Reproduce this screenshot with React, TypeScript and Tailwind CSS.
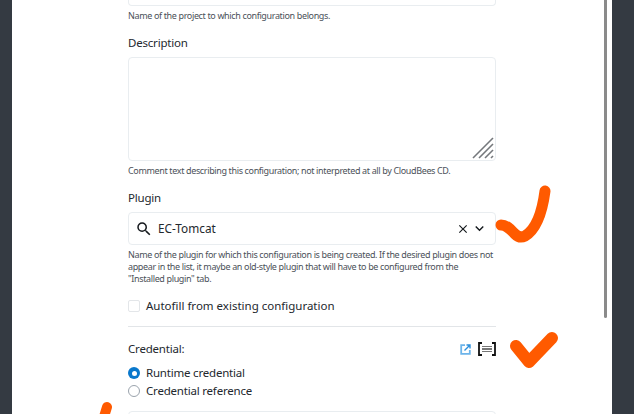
import { MdClose, MdExpandMore, MdSearch } from "react-icons/md";

function HelpText({ children }: { children: React.ReactNode }) {
  return <p className="text-[9px] leading-3 tracking-[-0.36px] text-[#4b5159]">{children}</p>;
}

export default function App() {
  return (
    <div className="relative flex h-[414px] w-[634px] overflow-hidden bg-white font-['Noto_Sans',sans-serif] text-[#23282e]">
      <div className="w-3 bg-[#343a42]" />

      <div className="flex-1 pl-[116px]">
        <div className="flex w-[368px] flex-col">
          <div className="h-[6px] rounded-b border border-t-0 border-[#e9edf0]" />
          <div className="mt-[4px]">
            <HelpText>Name of the project to which configuration belongs.</HelpText>
          </div>

          <label className="mt-[13px] text-[11.5px] leading-4 tracking-[-0.2px]">Description</label>
          <div className="relative mt-[6px] h-[104px] rounded border border-[#e9edf0]">
            <svg className="absolute bottom-[1px] right-[1px]" width="22" height="22" viewBox="0 0 22 22">
              <g stroke="#75787c" strokeWidth="1.6" fill="none">
                <path d="M1 21 21 1" />
                <path d="M7 21 21 7" />
                <path d="M13 21 21 13" />
                <path d="M19 21 21 19" />
              </g>
            </svg>
          </div>
          <div className="mt-[4px]">
            <HelpText>Comment text describing this configuration; not interpreted at all by CloudBees CD.</HelpText>
          </div>

          <label className="mt-[13px] text-[11.5px] leading-4 tracking-[-0.2px]">Plugin</label>
          <div className="mt-[6px] flex h-[33px] items-center rounded border border-[#e9edf0] pl-[6px]">
            <MdSearch className="h-[18px] w-[18px] text-[#15191d]" />
            <span className="ml-[5px] flex-1 text-[11.8px]">EC-Tomcat</span>
            <MdClose className="h-[14px] w-[14px] text-[#15191d]" />
            <MdExpandMore className="ml-[1px] mr-[7px] h-[17px] w-[17px] text-[#15191d]" />
          </div>
          <div className="mt-[4px]">
            <HelpText>
              Name of the plugin for which this configuration is being created. If the desired plugin does not appear in
              the list, it maybe an old-style plugin that will have to be configured from the "Installed plugin" tab.
            </HelpText>
          </div>

          <div className="mt-[13px] flex items-center">
            <span className="h-3 w-3 rounded-[2px] border border-[#e3e6e9]" />
            <span className="ml-[6px] text-[11.5px] leading-4">Autofill from existing configuration</span>
          </div>

          <div className="mt-[12px] border-t border-[#e2e5e8]" />

          <div className="mt-[14px] flex items-center justify-between">
            <span className="text-[11.5px] leading-4 tracking-[-0.2px]">Credential:</span>
            <div className="flex items-center gap-[7px]">
              <svg width="11" height="11" viewBox="0 0 11 11" fill="none" stroke="#6cb4ea" strokeWidth="1.8">
                <path d="M5 1.2H1.2v8.6h8.6V6" />
                <path d="M4.5 6.5 10 1M6.5 1H10v3.5" stroke="#2b8fdc" strokeWidth="1.4" />
              </svg>
              <svg width="18" height="14" viewBox="0 0 18 14" fill="none">
                <path d="M4 1H1v12h3M14 1h3v12h-3" stroke="#111" strokeWidth="1.8" />
                <path d="M4 4h10v1H4zM4 6h10v2H4zM4 9h10v1H4z" fill="#777" />
              </svg>
            </div>
          </div>

          <div className="mt-[7px] flex h-[18px] items-center">
            <span className="flex h-3 w-3 items-center justify-center rounded-full bg-[#0a78cc]">
              <span className="h-[5px] w-[5px] rounded-full bg-white" />
            </span>
            <span className="ml-[6px] text-[11.5px] tracking-[-0.2px]">Runtime credential</span>
          </div>
          <div className="flex h-[18px] items-center">
            <span className="h-3 w-3 rounded-full border border-[#9aa3ac]" />
            <span className="ml-[6px] text-[11.5px] tracking-[-0.2px]">Credential reference</span>
          </div>

          <div className="mt-[11px] h-8 rounded-t border border-[#e9edf0]" />
        </div>
      </div>

      <div className="w-[22px] bg-[#343a42]" />

      {/* scrollbar thumb */}
      <div className="absolute right-[27px] top-0 h-[318px] w-[3px] rounded-b-sm bg-[#8a8a8a]" />

      {/* hand drawn marks on top of the capture */}
      <svg className="pointer-events-none absolute left-0 top-0" width="634" height="414" fill="none" stroke="#ff5a00" strokeLinecap="round" strokeLinejoin="round">
        <path d="M501 225c6 0 10 5 14 9 3 3 6 4 10 2 10-6 17-22 20-45" strokeWidth="11" />
        <path d="M516 346 529 362 552 338" strokeWidth="12" />
        <path d="M107 407 103 420" strokeWidth="10" />
      </svg>
    </div>
  );
}
